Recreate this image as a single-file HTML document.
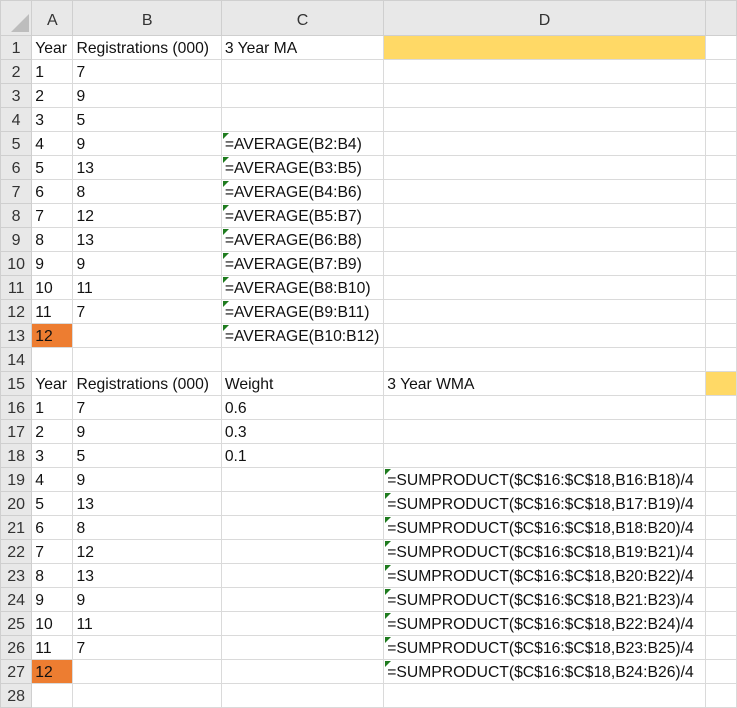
<!DOCTYPE html>
<html><head><meta charset="utf-8"><style>
body{margin:0;width:737px;height:693px;overflow:hidden;background:#fff;font-family:"Liberation Sans",sans-serif;}
table{border-collapse:collapse;table-layout:fixed;position:absolute;left:0;top:0;}
td{border:1px solid #dadada;height:21px;padding:2px 0 0 3px;font-size:15.7px;color:#111;white-space:nowrap;overflow:visible;line-height:21px;position:relative;}
tr.h td{height:28px;background:#e8e8e8;text-align:center;color:#333;font-size:16px;border-color:#cfcfcf;padding:6px 0 0 0;line-height:26px;}
td.rn{background:#e8e8e8;text-align:center;padding:2px 0 0 0;color:#333;font-size:16px;border-color:#cfcfcf;}
.y{background:#ffd966;}
.o{background:#ed7d31;}
.f::before{content:"";position:absolute;left:1px;top:1px;border-top:6px solid #1e7b1e;border-right:6px solid transparent;}
</style></head><body>
<table>
<colgroup><col style="width:33px"><col style="width:42px"><col style="width:150px"><col style="width:163px"><col style="width:323px"><col style="width:35px"></colgroup>
<tr class="h"><td><svg width="20" height="20" style="position:absolute;left:8px;top:11px"><polygon points="20,2 20,20 2,20" fill="#bdbdbd"/></svg></td><td>A</td><td>B</td><td>C</td><td>D</td><td></td></tr>
<tr><td class="rn">1</td><td>Year</td><td>Registrations (000)</td><td>3 Year MA</td><td class="y"></td><td></td></tr>
<tr><td class="rn">2</td><td>1</td><td>7</td><td></td><td></td><td></td></tr>
<tr><td class="rn">3</td><td>2</td><td>9</td><td></td><td></td><td></td></tr>
<tr><td class="rn">4</td><td>3</td><td>5</td><td></td><td></td><td></td></tr>
<tr><td class="rn">5</td><td>4</td><td>9</td><td class="f">=AVERAGE(B2:B4)</td><td></td><td></td></tr>
<tr><td class="rn">6</td><td>5</td><td>13</td><td class="f">=AVERAGE(B3:B5)</td><td></td><td></td></tr>
<tr><td class="rn">7</td><td>6</td><td>8</td><td class="f">=AVERAGE(B4:B6)</td><td></td><td></td></tr>
<tr><td class="rn">8</td><td>7</td><td>12</td><td class="f">=AVERAGE(B5:B7)</td><td></td><td></td></tr>
<tr><td class="rn">9</td><td>8</td><td>13</td><td class="f">=AVERAGE(B6:B8)</td><td></td><td></td></tr>
<tr><td class="rn">10</td><td>9</td><td>9</td><td class="f">=AVERAGE(B7:B9)</td><td></td><td></td></tr>
<tr><td class="rn">11</td><td>10</td><td>11</td><td class="f">=AVERAGE(B8:B10)</td><td></td><td></td></tr>
<tr><td class="rn">12</td><td>11</td><td>7</td><td class="f">=AVERAGE(B9:B11)</td><td></td><td></td></tr>
<tr><td class="rn">13</td><td class="o">12</td><td></td><td class="f">=AVERAGE(B10:B12)</td><td></td><td></td></tr>
<tr><td class="rn">14</td><td></td><td></td><td></td><td></td><td></td></tr>
<tr><td class="rn">15</td><td>Year</td><td>Registrations (000)</td><td>Weight</td><td>3 Year WMA</td><td class="y"></td></tr>
<tr><td class="rn">16</td><td>1</td><td>7</td><td>0.6</td><td></td><td></td></tr>
<tr><td class="rn">17</td><td>2</td><td>9</td><td>0.3</td><td></td><td></td></tr>
<tr><td class="rn">18</td><td>3</td><td>5</td><td>0.1</td><td></td><td></td></tr>
<tr><td class="rn">19</td><td>4</td><td>9</td><td></td><td class="f">=SUMPRODUCT($C$16:$C$18,B16:B18)/4</td><td></td></tr>
<tr><td class="rn">20</td><td>5</td><td>13</td><td></td><td class="f">=SUMPRODUCT($C$16:$C$18,B17:B19)/4</td><td></td></tr>
<tr><td class="rn">21</td><td>6</td><td>8</td><td></td><td class="f">=SUMPRODUCT($C$16:$C$18,B18:B20)/4</td><td></td></tr>
<tr><td class="rn">22</td><td>7</td><td>12</td><td></td><td class="f">=SUMPRODUCT($C$16:$C$18,B19:B21)/4</td><td></td></tr>
<tr><td class="rn">23</td><td>8</td><td>13</td><td></td><td class="f">=SUMPRODUCT($C$16:$C$18,B20:B22)/4</td><td></td></tr>
<tr><td class="rn">24</td><td>9</td><td>9</td><td></td><td class="f">=SUMPRODUCT($C$16:$C$18,B21:B23)/4</td><td></td></tr>
<tr><td class="rn">25</td><td>10</td><td>11</td><td></td><td class="f">=SUMPRODUCT($C$16:$C$18,B22:B24)/4</td><td></td></tr>
<tr><td class="rn">26</td><td>11</td><td>7</td><td></td><td class="f">=SUMPRODUCT($C$16:$C$18,B23:B25)/4</td><td></td></tr>
<tr><td class="rn">27</td><td class="o">12</td><td></td><td></td><td class="f">=SUMPRODUCT($C$16:$C$18,B24:B26)/4</td><td></td></tr>
<tr><td class="rn">28</td><td></td><td></td><td></td><td></td><td></td></tr>
</table>
</body></html>
